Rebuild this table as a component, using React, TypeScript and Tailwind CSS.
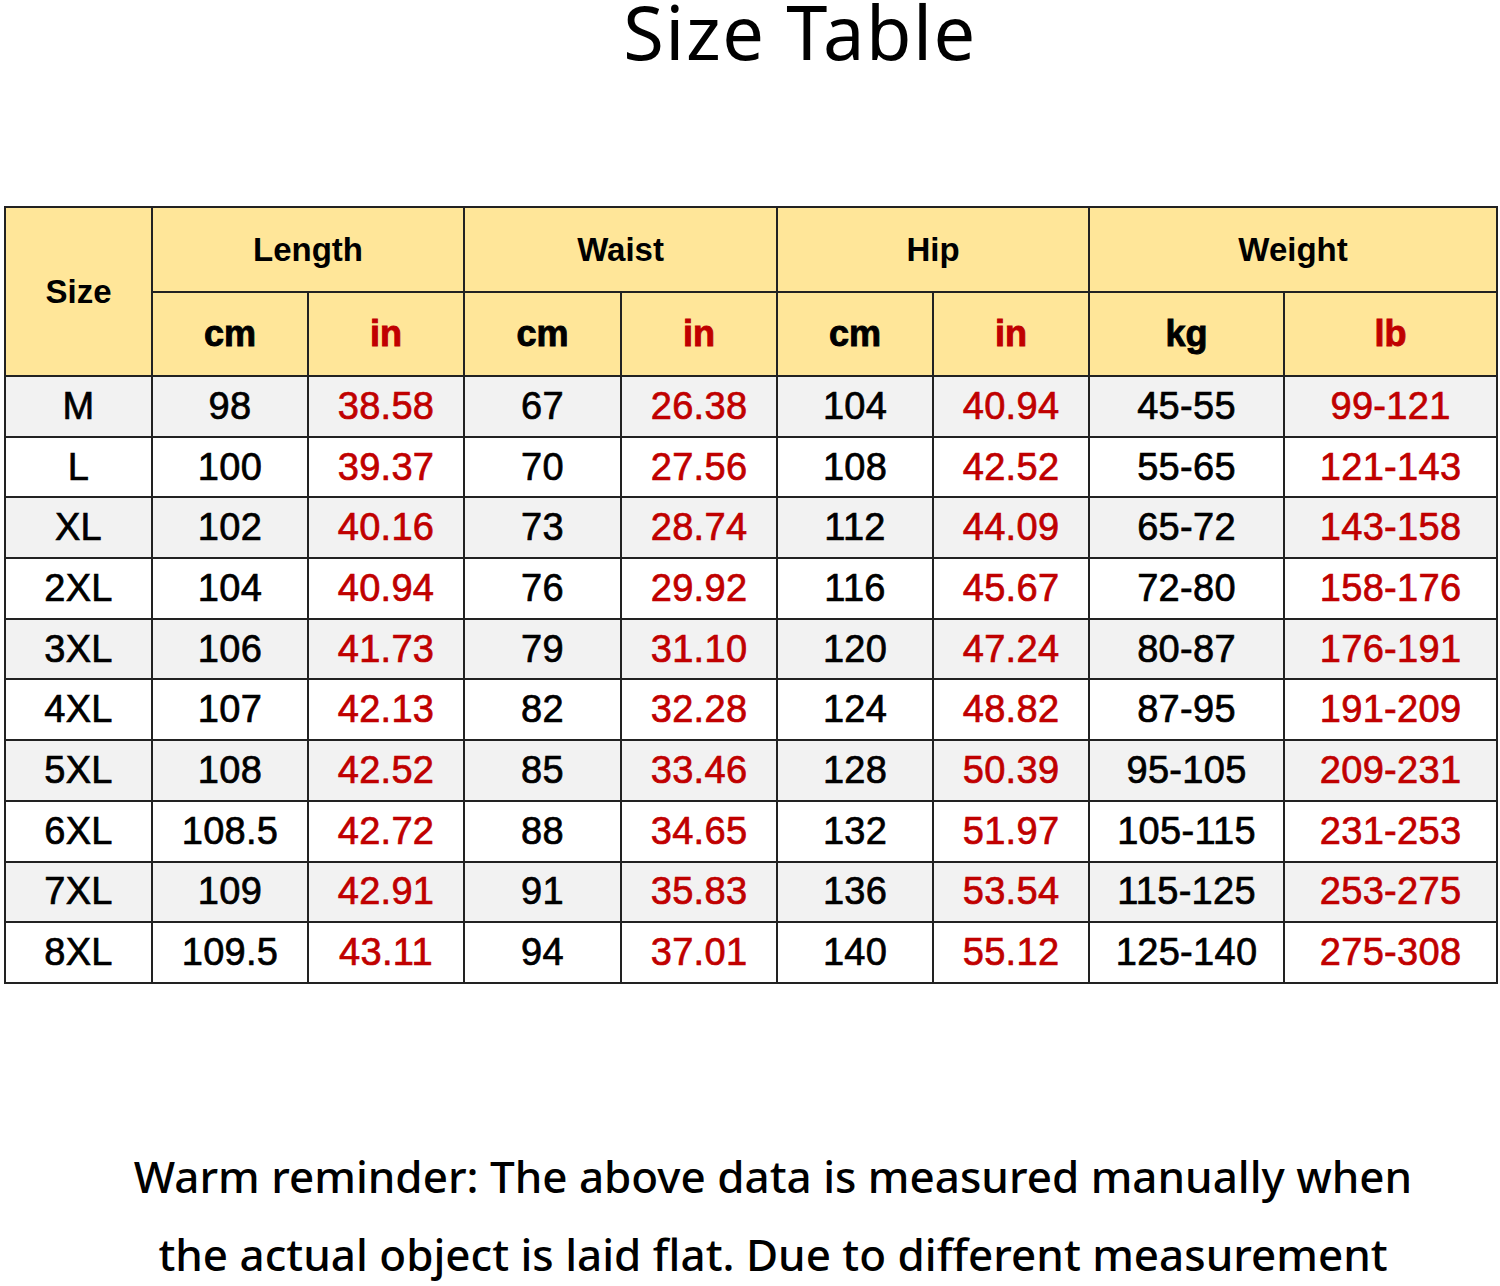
import React from 'react';

const rows: string[][] = [
  ['M', '98', '38.58', '67', '26.38', '104', '40.94', '45-55', '99-121'],
  ['L', '100', '39.37', '70', '27.56', '108', '42.52', '55-65', '121-143'],
  ['XL', '102', '40.16', '73', '28.74', '112', '44.09', '65-72', '143-158'],
  ['2XL', '104', '40.94', '76', '29.92', '116', '45.67', '72-80', '158-176'],
  ['3XL', '106', '41.73', '79', '31.10', '120', '47.24', '80-87', '176-191'],
  ['4XL', '107', '42.13', '82', '32.28', '124', '48.82', '87-95', '191-209'],
  ['5XL', '108', '42.52', '85', '33.46', '128', '50.39', '95-105', '209-231'],
  ['6XL', '108.5', '42.72', '88', '34.65', '132', '51.97', '105-115', '231-253'],
  ['7XL', '109', '42.91', '91', '35.83', '136', '53.54', '115-125', '253-275'],
  ['8XL', '109.5', '43.11', '94', '37.01', '140', '55.12', '125-140', '275-308'],
];

const widths = ['w-[147px]', 'w-[156px]', 'w-[156px]', 'w-[157px]', 'w-[156px]', 'w-[156px]', 'w-[156px]', 'w-[195px]', 'w-[213px]'];

const cell = 'border-2 border-[#222] text-center align-middle p-0';

const App = () => {
  return (
    <div className="w-[1500px] h-[1286px] overflow-hidden bg-white text-black">
      {/* Title */}
      <h1 className="h-[64px] text-center text-[74px] leading-[64px] font-['Noto_Sans',sans-serif] font-normal pl-[100px] tracking-[1.5px]">
        Size Table
      </h1>

      {/* Table */}
      <div className="mt-[142px] px-[4px]">
        <table className="w-[1492px] table-fixed border-collapse font-['Liberation_Sans',Arial,sans-serif]">
          <colgroup>
            {widths.map((w, i) => (
              <col key={i} className={w} />
            ))}
          </colgroup>
          <thead className="bg-[#ffe699] text-[33px] font-bold">
            <tr className="h-[85px]">
              <th rowSpan={2} className={cell}>Size</th>
              <th colSpan={2} className={cell}>Length</th>
              <th colSpan={2} className={cell}>Waist</th>
              <th colSpan={2} className={cell}>Hip</th>
              <th colSpan={2} className={cell}>Weight</th>
            </tr>
            <tr className="h-[84px] text-[36px] font-normal [-webkit-text-stroke:0.9px]">
              <th className={cell}>cm</th>
              <th className={`${cell} text-[#c00000]`}>in</th>
              <th className={cell}>cm</th>
              <th className={`${cell} text-[#c00000]`}>in</th>
              <th className={cell}>cm</th>
              <th className={`${cell} text-[#c00000]`}>in</th>
              <th className={cell}>kg</th>
              <th className={`${cell} text-[#c00000]`}>lb</th>
            </tr>
          </thead>
          <tbody className="text-[38px] tracking-[0.3px] [-webkit-text-stroke:0.7px]">
            {rows.map((r, ri) => (
              <tr key={ri} className={`h-[60.7px] ${ri % 2 === 0 ? 'bg-[#f2f2f2]' : 'bg-white'}`}>
                {r.map((v, ci) => (
                  <td
                    key={ci}
                    className={`${cell} ${ci > 0 && ci % 2 === 0 ? 'text-[#c00000]' : ''}`}
                  >
                    {v}
                  </td>
                ))}
              </tr>
            ))}
          </tbody>
        </table>
      </div>

      {/* Note */}
      <div className="mt-[153px] text-center font-['Noto_Sans',sans-serif] font-medium text-[44px] leading-[78px] pl-[46px]">
        <p>Warm reminder: The above data is measured manually when</p>
        <p>the actual object is laid flat. Due to different measurement</p>
      </div>
    </div>
  );
};

export default App;
